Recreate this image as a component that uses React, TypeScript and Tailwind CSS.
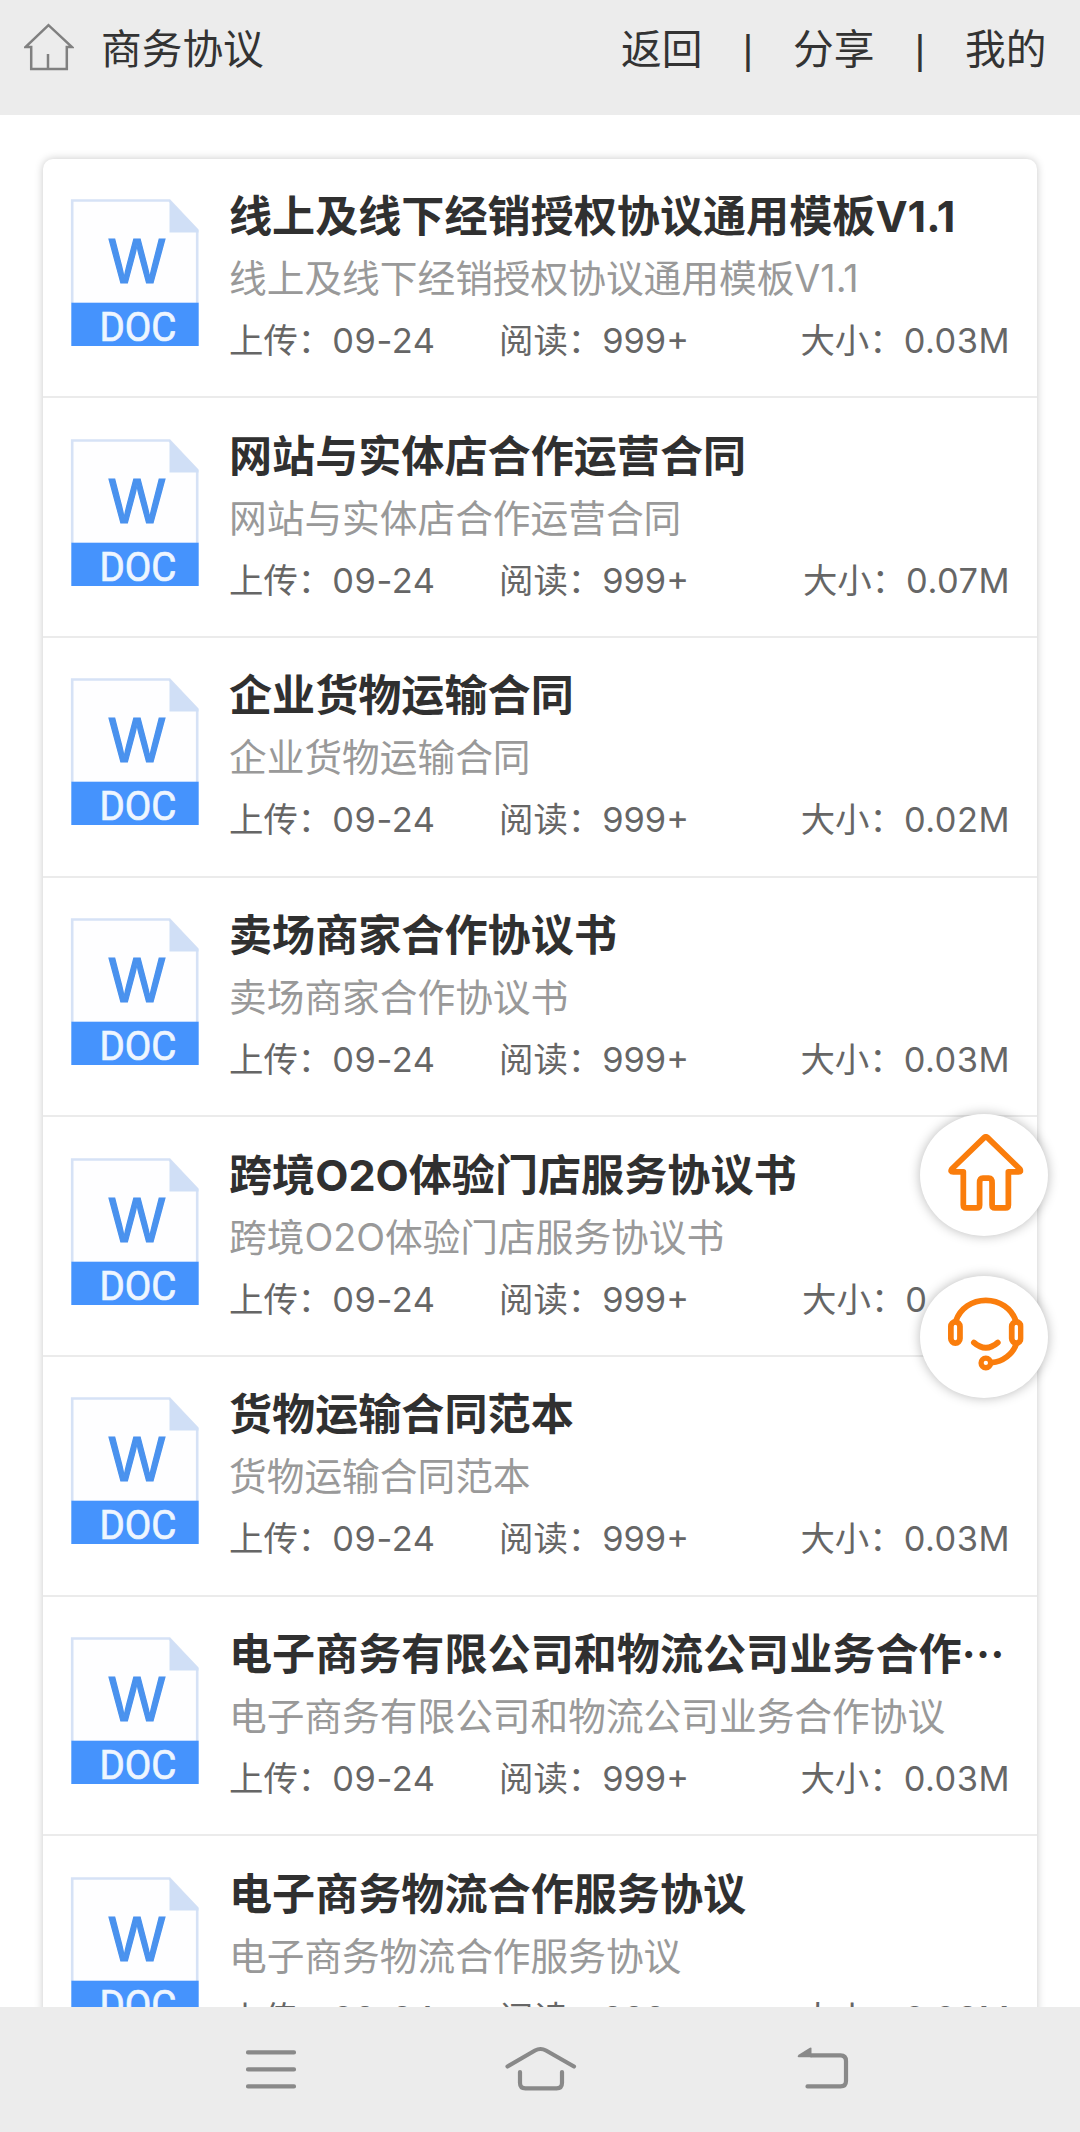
type Doc = { title: string; desc?: string; size: string; sizeClass?: string; cut?: boolean };

const docs: Doc[] = [
  { title: "线上及线下经销授权协议通用模板V1.1", size: "0.03M" },
  { title: "网站与实体店合作运营合同", size: "0.07M" },
  { title: "企业货物运输合同", size: "0.02M" },
  { title: "卖场商家合作协议书", size: "0.03M" },
  { title: "跨境O2O体验门店服务协议书", size: "0", sizeClass: "mr-[83px]" },
  { title: "货物运输合同范本", size: "0.03M" },
  {
    title: "电子商务有限公司和物流公司业务合作",
    desc: "电子商务有限公司和物流公司业务合作协议",
    size: "0.03M",
    cut: true,
  },
  { title: "电子商务物流合作服务协议", size: "0.03M" },
];

function DocIcon() {
  return (
    <svg width="128" height="148" viewBox="0 0 128 148" className="shrink-0 overflow-visible">
      <path d="M1.2 104V1.5H98.5L126.2 31V104" fill="#fefeff" stroke="#d6e2f6" strokeWidth="2.6" />
      <path d="M98.5 1V33.5H127.5V31Z" fill="#d0dff6" />
      <rect x="0.3" y="103.7" width="127.4" height="43.3" fill="#4593fd" />
      <text x="66" y="83.7" textAnchor="middle" textLength="59" lengthAdjust="spacingAndGlyphs" fontSize="60.5" fontFamily="Inter" fill="#4a92ee" stroke="#4a92ee" strokeWidth="1.2">
        W
      </text>
      <text x="67" y="142" textAnchor="middle" textLength="77" lengthAdjust="spacingAndGlyphs" fontSize="40.5" fontFamily="Roboto" fill="#eef6ff" stroke="#eef6ff" strokeWidth="0.7">
        DOC
      </text>
    </svg>
  );
}

function Row({ doc }: { doc: Doc }) {
  return (
    <li className="flex h-[239.7px] shrink-0 border-b-2 border-[#ebebeb] pl-7 pr-[27px] pt-[40.4px]">
      <DocIcon />
      <div className="ml-[30px] min-w-0 flex-1 whitespace-nowrap">
        <h2 className="-mt-[14.9px] flex h-[64px] text-[43.1px] leading-[64px] font-bold text-[#303030]">
          <span>{doc.title}</span>
          {doc.cut && <span className="font-['Noto_Sans_CJK_SC'] leading-[60px]">…</span>}
        </h2>
        <p className="h-[60px] text-[37.7px] leading-[60px] text-[#999999]">{doc.desc ?? doc.title}</p>
        <div className="flex h-[64px] text-[34.4px] leading-[65px] text-[#666666]">
          <span className="w-[270px]">
            上传：<span className="tracking-[0.6px]">09-24</span>
          </span>
          <span>阅读：999+</span>
          <span className="ml-auto">
            大小：<span className={doc.sizeClass ?? "tracking-[0.5px]"}>{doc.size}</span>
          </span>
        </div>
      </div>
    </li>
  );
}

const round =
  "flex h-[122px] w-32 items-center justify-center rounded-[50%] bg-white shadow-[0_0_12px_rgba(0,0,0,0.28)]";

export default function App() {
  return (
    <div
      lang="zh-CN"
      className="relative flex h-[2132px] w-[1080px] flex-col overflow-hidden bg-white font-['Inter','Noto_Sans_CJK_SC',sans-serif]"
    >
      <header className="flex h-[115px] shrink-0 items-start bg-[#ececec] pr-[33px] pl-6 text-[40.7px] leading-[60px] text-[#333333]">
        <svg width="50" height="50" viewBox="0 0 50 50" fill="none" stroke="#808080" strokeWidth="2.5" className="mt-[23px]">
          <path d="M24.5 2.2L1.5 24H7.2V46H42.8V24H48L24.5 2.2Z" />
          <path d="M24 31V46" />
        </svg>
        <h1 className="mt-[20px] ml-[27px]">商务协议</h1>
        <nav className="mt-[20px] ml-auto flex">
          <span className="w-[82px]">返回</span>
          <span className="w-[90px] text-center font-['Liberation_Sans'] text-[40px]">|</span>
          <span className="w-[82px]">分享</span>
          <span className="w-[90px] text-center font-['Liberation_Sans'] text-[40px]">|</span>
          <span className="w-[82px]">我的</span>
        </nav>
      </header>

      <main className="min-h-0 flex-1 overflow-hidden px-[43px] pt-[43.5px]">
        <ul className="flex flex-col rounded-[10px] bg-white shadow-[0_0_9px_rgba(0,0,0,0.22)]">
          {docs.map((d) => (
            <Row key={d.title} doc={d} />
          ))}
        </ul>
      </main>

      <aside className="absolute top-[1113.5px] left-[920px] flex flex-col gap-10">
        <button className={round}>
          <svg width="76.7" height="76.7" viewBox="0 0 80 80" fill="none" stroke="#fa7d0c" strokeWidth="6" strokeLinejoin="round" className="translate-x-[1.5px] -translate-y-[2px]">
            <path d="M38.5 3.5Q40 2.5 41.5 3.5L75.5 36.5Q77.5 39.5 74 39.5H63.5V74Q63.5 77 60.500 77H49.500Q46.500 77 46.500 74V51Q46.500 46 43 46H37Q33.500 46 33.500 51V74Q33.500 77 30.500 77H19.500Q16.500 77 16.500 74V39.500H6Q2.500 39.500 4.500 36.500Z" />
          </svg>
        </button>
        <button className={round}>
          <svg width="76.7" height="76.7" viewBox="0 0 80 80" fill="none" stroke="#fa7d0c" strokeWidth="6" strokeLinecap="round" className="translate-x-[1.5px] -translate-y-[3.4px]">
            <path d="M8.500 28C13 14 26 6 40 6S67 14 71.500 28" />
            <rect x="3.500" y="28.500" width="9.500" height="22" rx="4.750" />
            <rect x="67" y="28.500" width="9.500" height="22" rx="4.750" />
            <path d="M27.500 50Q40 61 52.500 50" />
            <circle cx="40" cy="71.300" r="5" strokeWidth="5.500" />
            <path d="M46 71C58 70 68 62 71.500 52" />
          </svg>
        </button>
      </aside>

      <footer className="flex h-[125px] shrink-0 items-start justify-between bg-[#ececec] pr-[220px] pl-[231px] pt-[34px] text-[#898989]">
        <svg width="80" height="56" viewBox="0 0 80 56" fill="none" stroke="currentColor" strokeWidth="4.200" strokeLinecap="round">
          <path d="M17 11.400H63M17 28.400H63M17 45.400H63" />
        </svg>
        <svg width="80" height="56" viewBox="0 0 80 56" fill="none" stroke="currentColor" strokeWidth="4.200" strokeLinecap="round" className="-translate-x-[5.5px]">
          <path d="M7 25.500L34.500 9.500Q40 6.500 45.500 9.500L73.500 25.500" />
          <path d="M19.500 31V42Q19.500 47.300 25 47.300H56Q61.500 47.300 61.500 42V31" />
        </svg>
        <svg width="80" height="56" viewBox="0 0 80 56" fill="none" stroke="currentColor" strokeWidth="4.200" strokeLinecap="round">
          <path d="M31 14.300H60.500Q66 14.300 66 20V40Q66 45.400 60.500 45.400H27.500" />
          <path d="M31.500 7.500V16.300H18.500Q16.500 15.500 19 13.500L29.500 7Q31.500 6 31.500 7.500Z" fill="currentColor" stroke="none" />
        </svg>
      </footer>
    </div>
  );
}
